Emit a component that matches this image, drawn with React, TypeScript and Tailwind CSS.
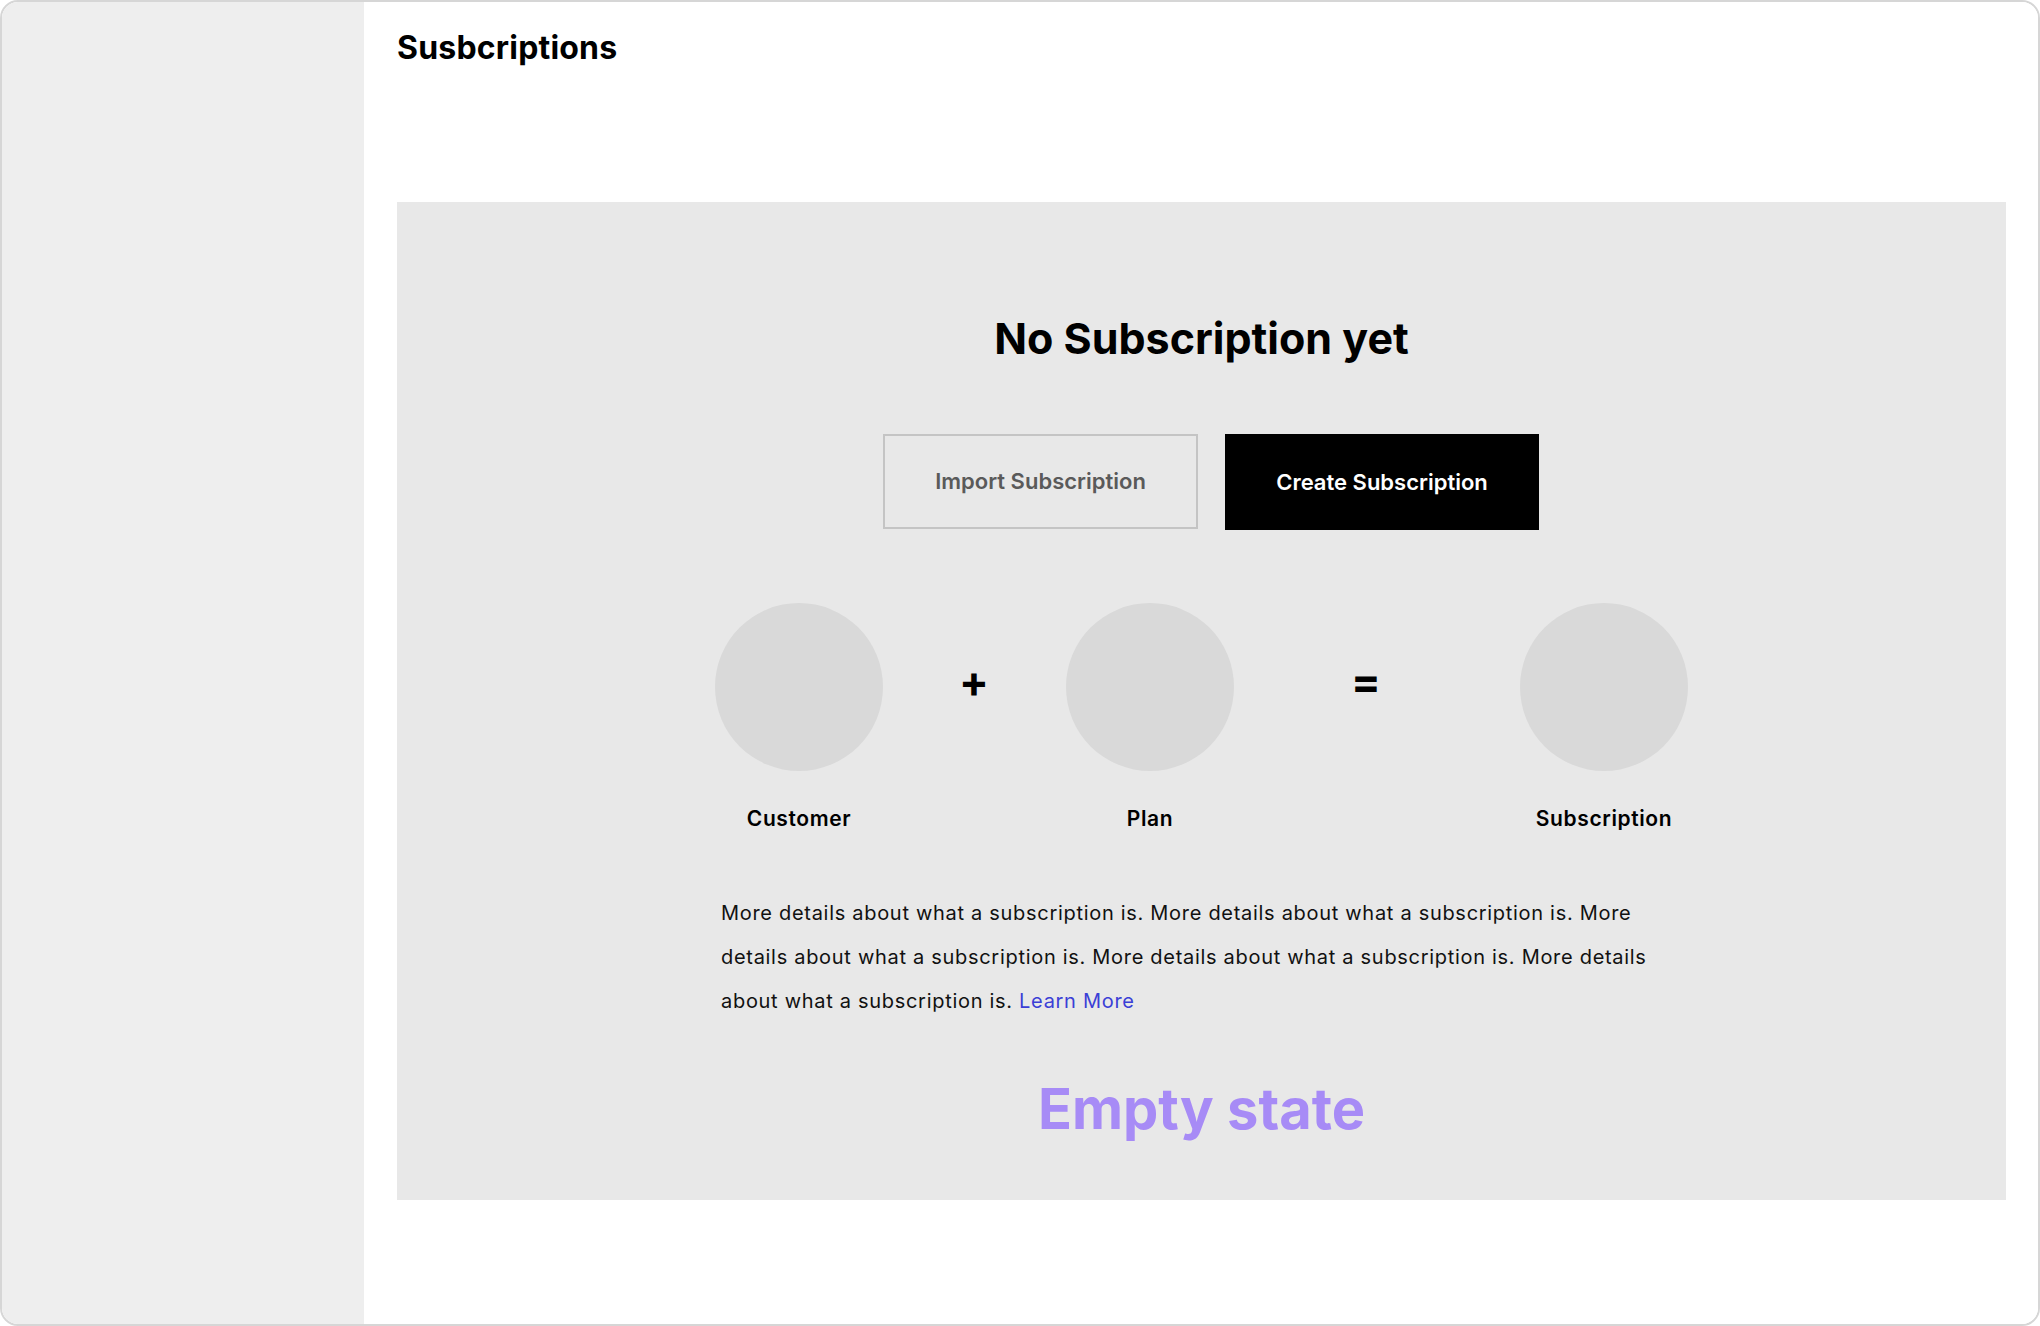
import React from "react";

const font = { fontFamily: "Inter, 'Noto Sans', sans-serif" };

function Item({ label }: { label: string }) {
  return (
    <div className="flex w-[168px] flex-col items-center">
      <div className="h-[168px] w-[168px] rounded-full bg-[#d9d9d9]" />
      <div className="mt-[35px] whitespace-nowrap text-[21px] font-semibold leading-[26px] tracking-[0.6px] text-black">{label}</div>
    </div>
  );
}

function Op({ children, w, ml }: { children: React.ReactNode; w: string; ml: string }) {
  return (
    <div className={`flex h-[168px] items-center ${w}`}>
      <span className={`mb-[13px] w-[26px] text-center text-[44px] font-bold leading-none text-black ${ml}`}>{children}</span>
    </div>
  );
}

export default function App() {
  return (
    <div className="h-[1326px] w-[2040px] overflow-hidden bg-white" style={font}>
      <div className="flex h-full w-full overflow-hidden rounded-[18px] border-2 border-[#d6d6d6]">
        <aside className="w-[362px] shrink-0 bg-[#eeeeee]" />
        <main className="flex-1 bg-white pl-[33px] pr-[32px] pt-[26px]">
          <h1 className="text-[32px] font-bold leading-[39px] tracking-[0.2px] text-black">Susbcriptions</h1>
          <section className="mt-[135px] flex flex-col items-center bg-[#e8e8e8] pb-[57px] pt-[111px]">
            <h2 className="text-[43px] font-bold leading-[50px] text-black">No Subscription yet</h2>
            <div className="ml-[19px] mt-[71px] flex gap-[27px]">
              <button className="flex h-[95px] w-[315px] items-center justify-center border-2 border-[#c4c4c4] text-[22px] font-semibold text-[#5a5a5a]">
                Import Subscription
              </button>
              <button className="flex h-[96px] w-[314px] items-center justify-center bg-black text-[22px] font-semibold text-white">
                Create Subscription
              </button>
            </div>
            <div className="mt-[73px] flex w-[973px] items-start">
              <Item label="Customer" />
              <Op w="w-[183px]" ml="ml-[76px]">+</Op>
              <Item label="Plan" />
              <Op w="w-[286px]" ml="ml-[117px]">=</Op>
              <Item label="Subscription" />
            </div>
            <p className="mt-[59px] w-[973px] pl-[6px] pr-[10px] text-[20px] leading-[44px] tracking-[0.7px] text-[#111111]">
              More details about what a subscription is. More details about what a subscription is. More details about
              what a subscription is. More details about what a subscription is. More details about what a subscription
              is. <a className="text-[#3b3fd6]">Learn More</a>
            </p>
            <div className="mt-[52px] text-[56px] font-bold leading-[68px] text-[#a78bf6]">Empty state</div>
          </section>
        </main>
      </div>
    </div>
  );
}
